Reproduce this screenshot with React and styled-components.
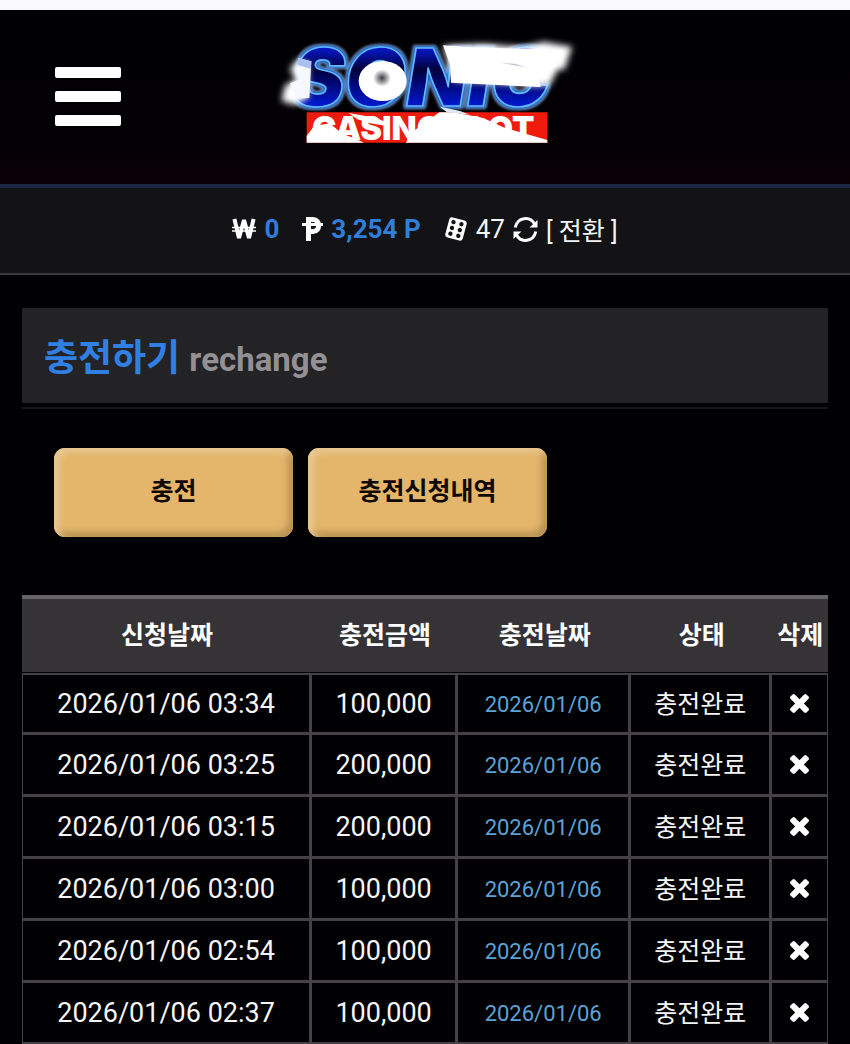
import React from 'react';
import styled, { createGlobalStyle } from 'styled-components';

const GlobalStyle = createGlobalStyle`
  * { box-sizing: border-box; }
  html { background: #010003; }
  body {
    margin: 0;
    background: #010003;
    color: #f5f5f5;
    font-family: Roboto, "Noto Sans CJK KR", sans-serif;
    font-size: 25px;
    line-height: 32px;
  }
  button { font: inherit; color: inherit; border: 0; padding: 0; background: none; cursor: pointer; }
  h1 { margin: 0; }
`;

const Page = styled.div`
  border-top: 10px solid #f8f8fd;
  overflow-x: hidden;
`;

const Header = styled.header`
  display: grid;
  grid-template-columns: 1fr auto 1fr;
  align-items: center;
  padding: 20px 55px 29px;
  background: linear-gradient(#000003, #020004 60%, #090004);
  border-bottom: 4px solid #1d2642;
`;

const MenuButton = styled.button`
  && {
    display: flex;
    flex-direction: column;
    gap: 13px;
    width: 66px;
    padding-top: 8px;
  }
`;

const MenuBar = styled.span`
  height: 11px;
  border-radius: 2px;
  background: #fff;
`;

const LogoLink = styled.a`
  display: block;
  line-height: 0;
  svg { overflow: visible; }
`;

const BalanceBar = styled.section`
  display: flex;
  justify-content: center;
  align-items: center;
  padding: 25px 16px 28px;
  border-bottom: 2px solid #3a393b;
  background: #131214;
`;

const BalanceItem = styled.div`
  display: flex;
  align-items: center;
  gap: 8px;
  margin-right: ${(p) => p.$space}px;
  svg { flex: none; }
`;

const Amount = styled.span`
  color: ${(p) => (p.$accent ? '#2f7edb' : '#f5f5f5')};
  font-size: 26px;
  font-weight: ${(p) => (p.$accent ? 700 : 400)};
`;

const ConvertButton = styled.button`
  display: flex;
  align-items: center;
  gap: 8px;
  height: 32px;
`;

const ConvertLabel = styled.span`
  padding-top: 6px;
`;

const Main = styled.main`
  padding: 33px 22px 0;
`;

const TitleFrame = styled.div`
  padding-bottom: 4px;
  border-bottom: 2px solid #171618;
`;

const Title = styled.h1`
  padding: 25px 22px 18px;
  background: #232224;
  color: #2f80e2;
  font-size: 37px;
  font-weight: 700;
  line-height: 51px;
`;

const Subtitle = styled.span`
  color: #929094;
  font-size: 33px;
`;

const Actions = styled.div`
  display: flex;
  flex-wrap: wrap;
  gap: 15px;
  padding: 39px 32px 58px;
`;

const ActionButton = styled.button`
  && {
    width: 239px;
    padding: 28px 0 29px;
    border-radius: 11px;
    background: #e3b66c;
    box-shadow: inset 5px 4px 6px #e9c896, inset -5px -5px 6px #b99253;
    color: #100805;
    font-weight: 700;
  }
`;

const HistoryTable = styled.table`
  width: 100%;
  table-layout: fixed;
  border-collapse: separate;
  border-spacing: 0;
  text-align: center;
`;

const Column = styled.col`
  width: ${(p) => p.$width};
`;

const HeadCell = styled.th`
  height: 78px;
  padding: 0;
  border-top: 4px solid #656366;
  border-bottom: 1px solid #010003;
  background: #353336;
  color: #fff;
  font-weight: 700;
  white-space: nowrap;
`;

const Cell = styled.td`
  height: 62px;
  padding: 0;
  border: solid #444246;
  border-width: 0 3px 3px 0;
  color: #f5f5f5;
  white-space: nowrap;
  &:first-child { border-left-width: 1px; }
  &:last-child { border-right-width: 1px; }
  tr:first-child > & { border-top-width: 2px; }
`;

const NumberCell = styled(Cell)`
  font-size: 27px;
`;

const DateCell = styled(Cell)`
  padding-top: 2px;
  color: #5ba3d6;
  font-size: 22px;
`;

const StatusCell = styled(Cell)`
  padding-top: 2px;
`;

const DeleteButton = styled.button`
  display: block;
  margin: 0 auto;
  line-height: 0;
`;

const Logo = () => (
  <svg width="320" height="125" viewBox="-15 0 960 375" role="img" aria-label="Sonic Casino Slot">
    <defs>
      <filter id="glow" x="-10%" y="-30%" width="120%" height="160%" colorInterpolationFilters="sRGB">
        <feMorphology in="SourceAlpha" operator="dilate" radius="4" result="thick" />
        <feGaussianBlur in="thick" stdDeviation="3" result="soft" />
        <feFlood floodColor="#0c62cf" />
        <feComposite in2="soft" operator="in" result="edge" />
        <feMorphology in="SourceAlpha" operator="dilate" radius="5" result="wide" />
        <feGaussianBlur in="wide" stdDeviation="4" result="far" />
        <feFlood floodColor="#8fa3cc" />
        <feComposite in2="far" operator="in" result="halo" />
        <feMerge>
          <feMergeNode in="halo" />
          <feMergeNode in="edge" />
          <feMergeNode in="SourceGraphic" />
        </feMerge>
      </filter>
      <filter id="haze" x="-20%" y="-20%" width="140%" height="140%">
        <feGaussianBlur stdDeviation="9" />
      </filter>
      <linearGradient id="ink" x1="0" y1="0" x2="0" y2="1">
        <stop offset="0.2" stopColor="#0618c8" />
        <stop offset="0.42" stopColor="#00003c" />
        <stop offset="0.6" stopColor="#000a80" />
        <stop offset="0.8" stopColor="#0018d0" />
      </linearGradient>
      <radialGradient id="pupil">
        <stop offset="0" stopColor="#3c3c44" />
        <stop offset="1" stopColor="#ffffff" />
      </radialGradient>
    </defs>
    <text
      x="66" y="228" fill="url(#ink)" stroke="#62b8ff" strokeWidth="5" strokeLinejoin="round" filter="url(#glow)"
      fontFamily="Inter, sans-serif" fontWeight="900" fontStyle="italic" fontSize="238"
    >
      SONIC
    </text>
    <ellipse cx="338" cy="153" rx="72" ry="60" fill="#fff" />
    <ellipse cx="336" cy="144" rx="27" ry="26" fill="url(#pupil)" />
    <path d="M80 90L116 100L114 205L72 224L34 212L46 165L78 150L60 118Z" fill="#fff" filter="url(#haze)" />
    <path d="M84 84L124 94L118 204L76 206L60 160L88 148Z" fill="#f6f8ff" />
    <path d="M84 84L124 94L122 116L84 106Z" fill="#a9c0f4" />
    <path d="M520 48L640 42L760 52L820 36L906 50L884 118L862 120L840 165L800 168L550 152Z" fill="#fff" filter="url(#haze)" />
    <path d="M519 46L600 52L880 60L856 112L800 126L812 171L543 158L541 105Z" fill="#fff" />
    <path d="M695 99L735 101L768 112L728 105Z" fill="#c4c7d3" />
    <path d="M110 247H832V338H110Z" fill="#f01b0c" />
    <text x="126" y="329" fill="#fff" fontFamily="Inter, sans-serif" fontWeight="900" fontSize="98">CASINO SLOT</text>
    <path d="M110 318L132 288L180 280L214 310L256 326L282 338H110Z" fill="#fff" />
    <path d="M236 249L320 264L350 278V288L300 280L262 268Z" fill="#fff" />
    <path d="M408 338L420 310L458 284L508 247H550L640 264L700 292L832 330V338Z" fill="#fff" />
    <path d="M510 230L570 243L600 254L530 246Z" fill="#dcebfa" />
  </svg>
);

const WonIcon = () => (
  <svg width="24" height="22" viewBox="0 0 24 22" fill="none" stroke="#fff" aria-hidden="true">
    <path d="M2.4 1L7 20L12 2L17 20L21.6 1" strokeWidth="4" strokeLinejoin="bevel" />
    <path d="M0 9.5H24M0 13H24" strokeWidth="1.6" />
  </svg>
);

const PointIcon = () => (
  <svg width="21" height="24" viewBox="0 0 21 24" fill="none" stroke="#fff" aria-hidden="true">
    <path d="M6.5 24V2.5H11C18.5 2.5 18.5 14.5 11 14.5H6" strokeWidth="5" />
    <path d="M0 7.5H21" strokeWidth="3" />
  </svg>
);

const DiceIcon = () => (
  <svg width="24" height="24" viewBox="0 0 24 24" aria-hidden="true">
    <g transform="rotate(15 12 12)">
      <rect x="3" y="1.6" width="18" height="20.8" rx="3" fill="#fff" />
      <g fill="#131214">
        <circle cx="7.8" cy="6" r="2.2" />
        <circle cx="7.8" cy="12" r="2.2" />
        <circle cx="7.8" cy="18" r="2.2" />
        <circle cx="16" cy="6" r="2.2" />
        <circle cx="16" cy="12" r="2.2" />
        <circle cx="16" cy="18" r="2.2" />
      </g>
    </g>
  </svg>
);

const RefreshIcon = () => (
  <svg width="25" height="25" viewBox="0 0 25 25" fill="none" stroke="#fff" aria-hidden="true">
    <path d="M2.2 10.5C4.5 0 17 -1.2 21.5 7M22.8 14.5C20.5 25 8 26.2 3.5 18" strokeWidth="3" />
    <path d="M24.5 3V10.5H16.5ZM0.5 22V14.5H8.5Z" fill="#fff" stroke="none" />
  </svg>
);

const CrossIcon = () => (
  <svg width="19" height="19" viewBox="302 366 1188 1188" aria-hidden="true">
    <path
      fill="#fff"
      d="M1490 1322q0 40-28 68l-136 136q-28 28-68 28t-68-28l-294-294-294 294q-28 28-68 28t-68-28l-136-136q-28-28-28-68t28-68l294-294-294-294q-28-28-28-68t28-68l136-136q28-28 68-28t68 28l294 294 294-294q28-28 68-28t68 28l136 136q28 28 28 68t-28 68l-294 294 294 294q28 28 28 68z"
    />
  </svg>
);

const columns = [
  ['신청날짜', '36%'],
  ['충전금액', '18.1%'],
  ['충전날짜', '21.5%'],
  ['상태', '17.5%'],
  ['삭제', '6.9%'],
];

const history = [
  ['03:34', '100,000'],
  ['03:25', '200,000'],
  ['03:15', '200,000'],
  ['03:00', '100,000'],
  ['02:54', '100,000'],
  ['02:37', '100,000'],
];

export default function App() {
  return (
    <Page>
      <GlobalStyle />
      <Header>
        <MenuButton type="button" aria-label="메뉴">
          <MenuBar />
          <MenuBar />
          <MenuBar />
        </MenuButton>
        <LogoLink href="#home">
          <Logo />
        </LogoLink>
      </Header>

      <BalanceBar>
        <BalanceItem $space={23}>
          <WonIcon />
          <Amount $accent>0</Amount>
        </BalanceItem>
        <BalanceItem $space={23}>
          <PointIcon />
          <Amount $accent>3,254 P</Amount>
        </BalanceItem>
        <BalanceItem $space={8}>
          <DiceIcon />
          <Amount>47</Amount>
        </BalanceItem>
        <ConvertButton type="button">
          <RefreshIcon />
          <ConvertLabel>[ 전환 ]</ConvertLabel>
        </ConvertButton>
      </BalanceBar>

      <Main>
        <TitleFrame>
          <Title>
            충전하기 <Subtitle>rechange</Subtitle>
          </Title>
        </TitleFrame>

        <Actions>
          <ActionButton type="button">충전</ActionButton>
          <ActionButton type="button">충전신청내역</ActionButton>
        </Actions>

        <HistoryTable>
          <colgroup>
            {columns.map(([label, width]) => (
              <Column key={label} $width={width} />
            ))}
          </colgroup>
          <thead>
            <tr>
              {columns.map(([label]) => (
                <HeadCell key={label} scope="col">{label}</HeadCell>
              ))}
            </tr>
          </thead>
          <tbody>
            {history.map(([time, amount]) => (
              <tr key={time}>
                <NumberCell>2026/01/06 {time}</NumberCell>
                <NumberCell>{amount}</NumberCell>
                <DateCell>2026/01/06</DateCell>
                <StatusCell>충전완료</StatusCell>
                <Cell>
                  <DeleteButton type="button" aria-label="삭제">
                    <CrossIcon />
                  </DeleteButton>
                </Cell>
              </tr>
            ))}
          </tbody>
        </HistoryTable>
      </Main>
    </Page>
  );
}
